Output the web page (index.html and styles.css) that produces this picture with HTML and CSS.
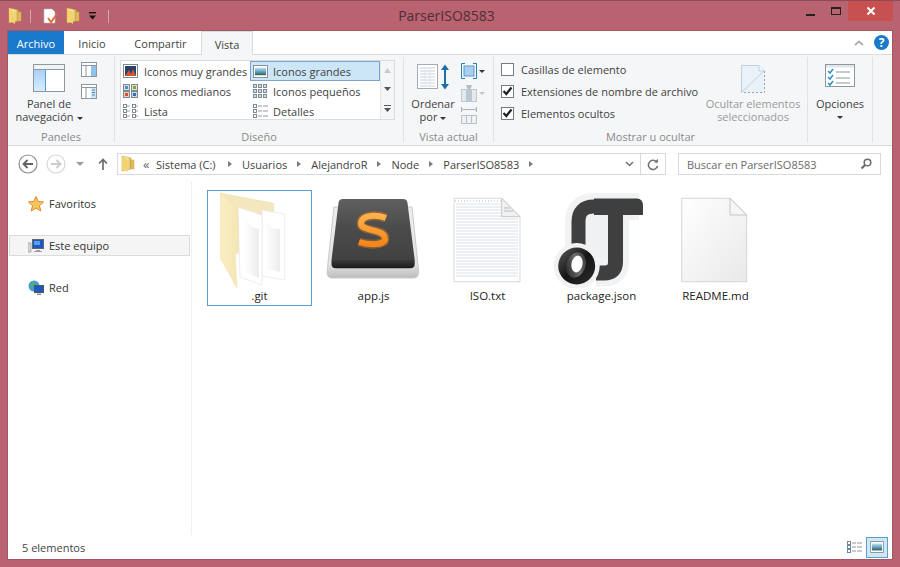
FILE: index.html
```html
<!DOCTYPE html>
<html lang="es">
<head>
<meta charset="utf-8">
<title>ParserISO8583</title>
<link rel="stylesheet" href="styles.css">
</head>
<body>
<svg class="defs" width="0" height="0">
  <defs>
    <linearGradient id="gFolder" x1="0" y1="0" x2="1" y2="0"><stop offset="0" stop-color="#f6dc84"/><stop offset=".55" stop-color="#fbeeb2"/><stop offset="1" stop-color="#d6ac4a"/></linearGradient>
    <linearGradient id="gFlap" x1="0" y1="0" x2="1" y2="0"><stop offset="0" stop-color="#f9eec4"/><stop offset="1" stop-color="#f5e6b4"/></linearGradient>
    <linearGradient id="gPaper" x1="0" y1="0" x2="1" y2="1"><stop offset="0" stop-color="#ffffff"/><stop offset="1" stop-color="#e9e9e9"/></linearGradient>
    <linearGradient id="gInner" x1="0" y1="0" x2="1" y2="0"><stop offset="0" stop-color="#fefefe"/><stop offset="1" stop-color="#ececec"/></linearGradient>
    <linearGradient id="gKey" x1="0" y1="0" x2="0" y2="1"><stop offset="0" stop-color="#606060"/><stop offset=".45" stop-color="#4c4c4c"/><stop offset="1" stop-color="#414141"/></linearGradient>
    <linearGradient id="gLip" x1="0" y1="0" x2="0" y2="1"><stop offset="0" stop-color="#3a3a3a"/><stop offset="1" stop-color="#191919"/></linearGradient>
    <linearGradient id="gBase" x1="0" y1="0" x2="0" y2="1"><stop offset="0" stop-color="#eeeeee"/><stop offset=".8" stop-color="#e2e2e2"/><stop offset="1" stop-color="#bdbdbd"/></linearGradient>
    <linearGradient id="gS" x1="0" y1="0" x2="0" y2="1"><stop offset="0" stop-color="#fdb047"/><stop offset="1" stop-color="#f4861a"/></linearGradient>
    <linearGradient id="gPane" x1="0" y1="0" x2="0" y2="1"><stop offset="0" stop-color="#a9d1f7"/><stop offset="1" stop-color="#d9ecfc"/></linearGradient>
    <linearGradient id="gPic" x1="0" y1="0" x2="0" y2="1"><stop offset="0" stop-color="#bfe0f2"/><stop offset=".55" stop-color="#5da0bf"/><stop offset="1" stop-color="#2f5f4a"/></linearGradient>
    <linearGradient id="gOrb" x1="0" y1="0" x2="1" y2="1"><stop offset="0" stop-color="#5a5a5a"/><stop offset=".5" stop-color="#151515"/><stop offset="1" stop-color="#2c2c2c"/></linearGradient>
    <linearGradient id="gSwirl" x1="0" y1="1" x2="1" y2="0"><stop offset="0" stop-color="#181818"/><stop offset=".55" stop-color="#6e6e6e"/><stop offset="1" stop-color="#262626"/></linearGradient>
    <symbol id="folderSmall" viewBox="0 0 14 18">
      <path d="M1 1 L10 3 V14 L1 16Z" fill="url(#gFolder)" stroke="#c9a445" stroke-width=".6"/>
      <path d="M10 5 H13 V14 H10Z" fill="#e2bd58" stroke="#c9a445" stroke-width=".5"/>
      <path d="M1 1 L7 5 V17 L1 13Z" fill="#f3d36f"/>
    </symbol>
    <symbol id="thumb" viewBox="0 0 16 14">
      <rect x=".5" y=".5" width="15" height="13" fill="#fff" stroke="#7f8a94"/>
      <rect x="2" y="3" width="12" height="8" fill="url(#gPic)"/>
    </symbol>
  </defs>
</svg>

<div class="titlebar">
  <div class="qat">
    <svg class="qat-ic" viewBox="0 0 14 18"><use href="#folderSmall"/></svg>
    <span class="qat-sep"></span>
    <svg class="qat-ic" viewBox="0 0 14 18"><path d="M1 2H9L12 5V16H1Z" fill="#fff" stroke="#bbb" stroke-width=".6"/><path d="M5 11 L8 15 L14 7" fill="none" stroke="#e0703a" stroke-width="2"/></svg>
    <svg class="qat-ic qat-ic2" viewBox="0 0 14 18"><use href="#folderSmall"/></svg>
    <svg class="qat-drop" viewBox="0 0 9 9"><rect x="1" y="0" width="7" height="1.4" fill="#111"/><path d="M1 3.5H8L4.5 7.5Z" fill="#111"/></svg>
    <span class="qat-sep qat-sep2"></span>
  </div>
  <div class="title">ParserISO8583</div>
  <div class="winbtns">
    <span class="wb wb-min"><i></i></span>
    <span class="wb wb-max"><i></i></span>
    <span class="wb wb-close"><svg width="10" height="10" viewBox="0 0 10 10"><path d="M1.500 1.500 L8.500 8.500 M8.500 1.500 L1.500 8.500" stroke="#fff" stroke-width="2"/></svg></span>
  </div>
</div>

<div class="window">
  <div class="tabs">
    <span class="tab tab-file">Archivo</span>
    <span class="tab tab-inicio">Inicio</span>
    <span class="tab tab-share">Compartir</span>
    <span class="tab tab-on">Vista</span>
    <span class="tabs-right">
      <svg class="chev" width="10" height="6" viewBox="0 0 10 6"><path d="M1 5 L5 1.500 L9 5" fill="none" stroke="#a9adb1" stroke-width="1.800"/></svg>
      <span class="help">?</span>
    </span>
  </div>

  <div class="ribbon">
    <section class="group g-panes">
      <div class="gbody panes">
        <div class="bigbtn nav-btn">
          <svg width="32" height="29" viewBox="0 0 32 29"><rect x=".5" y=".5" width="31" height="27" fill="#fff" stroke="#8d979f"/><rect x="1" y="1" width="30" height="4" fill="#f1f3f5"/><path d="M1 5.500H31" stroke="#8d979f"/><rect x="1" y="6" width="11" height="21" fill="url(#gPane)"/><path d="M12.500 6V27" stroke="#4f9bd9"/></svg>
          <span class="biglbl">Panel de<br>navegación<i class="caret caret-in"></i></span>
        </div>
        <div class="pane-small">
          <svg width="16" height="15" viewBox="0 0 16 15"><rect x=".5" y=".5" width="15" height="14" fill="#fff" stroke="#8d979f"/><path d="M1 3.500H15" stroke="#8d979f"/><path d="M5 4V14" stroke="#8d979f"/><rect x="10" y="4" width="5" height="10" fill="#8fc3ee"/></svg>
          <svg width="16" height="15" viewBox="0 0 16 15"><rect x=".5" y=".5" width="15" height="14" fill="#fff" stroke="#8d979f"/><path d="M1 3.500H15" stroke="#8d979f"/><path d="M5 4V14" stroke="#8d979f"/><rect x="10" y="4" width="5" height="10" fill="#cfe4f6"/><path d="M11 6H14M11 8.500H14M11 11H14" stroke="#4f86b8"/></svg>
        </div>
      </div>
      <div class="glabel">Paneles</div>
    </section>

    <section class="group g-layout">
      <div class="gbody">
        <div class="gallery">
          <div class="gal-grid">
            <div class="gal-item"><svg class="gi" width="15" height="14" viewBox="0 0 15 14"><rect x=".5" y=".5" width="14" height="13" fill="#fff" stroke="#7f8a94"/><rect x="2" y="2" width="11" height="10" fill="#27406b"/><path d="M2 12 L6 6 L8 10 L10 5 L13 12Z" fill="#d2562c"/></svg>Iconos muy grandes</div>
            <div class="gal-item gal-on"><svg class="gi" width="15" height="13" viewBox="0 0 16 14"><use href="#thumb"/></svg>Iconos grandes</div>
            <div class="gal-item"><svg class="gi" width="15" height="14" viewBox="0 0 15 14"><rect x=".5" y=".5" width="6" height="6" fill="#cfe0ec" stroke="#7f8a94"/><rect x="2" y="2" width="3" height="3" fill="#5b8fb8"/><rect x="8.500" y=".5" width="6" height="6" fill="#dfe6c4" stroke="#7f8a94"/><rect x="10" y="2" width="3" height="3" fill="#8aa03c"/><rect x=".5" y="7.500" width="6" height="6" fill="#efcdbf" stroke="#7f8a94"/><rect x="2" y="9" width="3" height="3" fill="#c9552c"/><rect x="8.500" y="7.500" width="6" height="6" fill="#cfdcea" stroke="#7f8a94"/><rect x="10" y="9" width="3" height="3" fill="#3a6ea5"/></svg>Iconos medianos</div>
            <div class="gal-item"><svg class="gi" width="15" height="15" viewBox="0 0 15 15"><g fill="#cfe0ec" stroke="#7f8a94"><rect x=".5" y=".5" width="3" height="3"/><rect x="5.500" y=".5" width="3" height="3"/><rect x="10.500" y=".5" width="3" height="3"/><rect x=".5" y="5.500" width="3" height="3"/><rect x="5.500" y="5.500" width="3" height="3"/><rect x="10.500" y="5.500" width="3" height="3"/><rect x=".5" y="10.500" width="3" height="3"/><rect x="5.500" y="10.500" width="3" height="3"/><rect x="10.500" y="10.500" width="3" height="3"/></g></svg>Iconos pequeños</div>
            <div class="gal-item"><svg class="gi" width="15" height="14" viewBox="0 0 15 14"><g fill="#fff" stroke="#7f8a94"><rect x=".5" y=".5" width="3" height="3"/><rect x=".5" y="5.500" width="3" height="3"/><rect x=".5" y="10.500" width="3" height="3"/><rect x="9.500" y=".5" width="3" height="3"/><rect x="9.500" y="5.500" width="3" height="3"/><rect x="9.500" y="10.500" width="3" height="3"/></g><path d="M4 2H7M4 7H7M4 12H7M13 2H15M13 7H15M13 12H15" stroke="#9aa1a8"/></svg>Lista</div>
            <div class="gal-item"><svg class="gi" width="15" height="14" viewBox="0 0 15 14"><g fill="#fff" stroke="#7f8a94"><rect x=".5" y=".5" width="3" height="3"/><rect x=".5" y="5.500" width="3" height="3"/><rect x=".5" y="10.500" width="3" height="3"/></g><path d="M5 2H9M10 2H15M5 7H9M10 7H15M5 12H9M10 12H15" stroke="#8f969d"/></svg>Detalles</div>
          </div>
          <div class="gal-scroll">
            <svg width="7" height="5" viewBox="0 0 7 5"><path d="M0 5L3.500 0L7 5Z" fill="#c9cccf"/></svg>
            <svg width="7" height="4" viewBox="0 0 7 4"><path d="M0 0H7L3.500 4Z" fill="#555"/></svg>
            <svg width="7" height="7" viewBox="0 0 7 7"><path d="M0 0H7V1H0Z M0 3H7L3.500 7Z" fill="#555"/></svg>
          </div>
        </div>
      </div>
      <div class="glabel">Diseño</div>
    </section>

    <section class="group g-current">
      <div class="gbody current">
        <div class="bigbtn sort-btn">
          <svg width="33" height="26" viewBox="0 0 33 26"><rect x=".5" y=".5" width="20" height="24" fill="#fff" stroke="#a4abb1"/><path d="M3 4H18M3 7H18M3 10H18M3 13H18M3 16H18M3 19H18M3 22H18" stroke="#c5d4de"/><path d="M8 4V23M13 4V23" stroke="#dfe6eb"/><path d="M28 2V24" stroke="#1f6da8" stroke-width="2"/><path d="M24 6L28 .5L32 6ZM24 20L28 25.500L32 20Z" fill="#1f6da8"/></svg>
          <span class="biglbl">Ordenar<br>por<i class="caret caret-in"></i></span>
        </div>
        <div class="cur-small">
          <div class="cs-row"><svg width="16" height="16" viewBox="0 0 16 16"><path d="M4 .5H.5V15.500H4M12 .5H15.500V15.500H12" fill="none" stroke="#2b7fb8"/><rect x="3" y="3" width="10" height="10" fill="#a9cfee" stroke="#5b9bd0"/></svg><i class="caret"></i></div>
          <div class="cs-row"><svg width="16" height="17" viewBox="0 0 16 17"><path d="M5 0H11L9.500 4H6.500Z" fill="#b5bdc4"/><rect x=".5" y="4.500" width="15" height="12" fill="#e3eaef" stroke="#c0c8ce"/><rect x="5" y="4" width="6" height="13" fill="#bcc8d1"/></svg><i class="caret caret-dim"></i></div>
          <div class="cs-row"><svg width="16" height="18" viewBox="0 0 16 18"><path d="M.5 1V6M15.500 1V6M2 3.500H14" stroke="#a8b4bc"/><path d="M2 1.500V5.500L0 3.500ZM14 1.500V5.500L16 3.500Z" fill="#a8b4bc" opacity=".5"/><rect x=".5" y="9.500" width="15" height="8" fill="#eef2f5" stroke="#b8c2c9"/><path d="M5.500 10V17M10.500 10V17" stroke="#b8c2c9"/></svg></div>
        </div>
      </div>
      <div class="glabel">Vista actual</div>
    </section>

    <section class="group g-show">
      <div class="gbody show">
        <div class="checks">
          <label class="chk"><span class="box"></span>Casillas de elemento</label>
          <label class="chk"><span class="box on"><svg width="11" height="10" viewBox="0 0 11 10"><path d="M1.500 5 L4.300 8 L9.500 1.500" fill="none" stroke="#222" stroke-width="2.200"/></svg></span>Extensiones de nombre de archivo</label>
          <label class="chk"><span class="box on"><svg width="11" height="10" viewBox="0 0 11 10"><path d="M1.500 5 L4.300 8 L9.500 1.500" fill="none" stroke="#222" stroke-width="2.200"/></svg></span>Elementos ocultos</label>
        </div>
        <div class="bigbtn hide-btn">
          <svg width="24" height="28" viewBox="0 0 24 28"><path d="M.5 .5H18L23.500 6V27.500H.5Z" fill="#e9f1f9"/><path d="M.5 27.500V.5H18L23.500 6" fill="none" stroke="#c3cfd9"/><path d="M18 .5V6H23.500" fill="#f8fbfd" stroke="#c3cfd9"/><path d="M23.500 6V27.500H.5" fill="none" stroke="#9aa4ac" stroke-dasharray="2 2"/><path d="M.5 27.500L23 6" stroke="#c3cfd9"/></svg>
          <span class="biglbl dim">Ocultar elementos<br>seleccionados</span>
        </div>
      </div>
      <div class="glabel">Mostrar u ocultar</div>
    </section>

    <section class="group g-opts">
      <div class="gbody">
        <div class="bigbtn opts-btn">
          <svg width="30" height="24" viewBox="0 0 30 24"><rect x=".5" y=".5" width="29" height="22" fill="#fff" stroke="#8d979f"/><rect x="1" y="1" width="28" height="2.500" fill="#e2e6e9"/><path d="M3 7L5 9L8 5M3 13L5 15L8 11M3 19L5 21L8 17" fill="none" stroke="#2b93c9" stroke-width="1.500"/><path d="M11 8H25M11 14H25M11 19H25" stroke="#8d979f"/></svg>
          <span class="biglbl">Opciones<br><i class="caret"></i></span>
        </div>
      </div>
    </section>
  </div>

  <div class="navbar">
    <span class="navbtn"><svg width="20" height="20" viewBox="0 0 20 20"><circle cx="10" cy="10" r="9" fill="#fff" stroke="#8a8d90" stroke-width="1.200"/><path d="M15 10H6M9.500 6L5.500 10L9.500 14" fill="none" stroke="#5e6266" stroke-width="1.800"/></svg></span>
    <span class="navbtn nb2"><svg width="20" height="20" viewBox="0 0 20 20"><circle cx="10" cy="10" r="9" fill="#fff" stroke="#d4d6d8" stroke-width="1.200"/><path d="M5 10H14M10.500 6L14.500 10L10.500 14" fill="none" stroke="#c9cbce" stroke-width="1.800"/></svg></span>
    <svg class="nb3" width="8" height="4" viewBox="0 0 8 4"><path d="M0 0H8L4 4Z" fill="#9a9da0"/></svg>
    <svg class="nb4" width="10" height="12" viewBox="0 0 10 12"><path d="M5 12V2M1 5.500L5 1.500L9 5.500" fill="none" stroke="#6a6d70" stroke-width="1.700"/></svg>
    <div class="address">
      <svg class="addr-folder" width="14" height="18" viewBox="0 0 14 18"><use href="#folderSmall"/></svg>
      <span class="laquo">«</span>
      <span class="crumb crumb-first">Sistema (C:)</span><i class="arrow"></i>
      <span class="crumb">Usuarios</span><i class="arrow"></i>
      <span class="crumb">AlejandroR</span><i class="arrow"></i>
      <span class="crumb">Node</span><i class="arrow"></i>
      <span class="crumb">ParserISO8583</span><i class="arrow"></i>
      <span class="addr-end">
        <svg width="9" height="6" viewBox="0 0 9 6"><path d="M1 1L4.500 4.500L8 1" fill="none" stroke="#6e7276" stroke-width="1.500"/></svg>
        <span class="refresh"><svg width="12" height="13" viewBox="0 0 12 13"><path d="M9.800 4.300A4.600 4.600 0 1 0 10.500 8" fill="none" stroke="#6e7276" stroke-width="1.500"/><path d="M7 4.500H11V.8Z" fill="#6e7276"/></svg></span>
      </span>
    </div>
    <div class="search">
      <span>Buscar en ParserISO8583</span>
      <svg width="12" height="12" viewBox="0 0 12 12"><circle cx="7.500" cy="4.500" r="3.300" fill="none" stroke="#6a6d70" stroke-width="1.500"/><path d="M5 7L1.500 10.500" stroke="#6a6d70" stroke-width="2.200"/></svg>
    </div>
  </div>

  <div class="main">
    <aside class="sidebar">
      <div class="side-row"><svg class="side-ic" width="16" height="16" viewBox="0 0 16 16"><path d="M8 .5L10.200 5.500L15.600 6L11.500 9.600L12.800 15L8 12.100L3.200 15L4.500 9.600L.4 6L5.800 5.500Z" fill="#f7c65a" stroke="#e08a2c"/></svg>Favoritos</div>
      <div class="side-row on"><svg class="side-ic" width="16" height="14" viewBox="0 0 16 14"><rect x="0" y="4" width="3" height="9" fill="#d7dadd" stroke="#888" stroke-width=".6"/><rect x="4.500" y=".5" width="11" height="9" fill="#1d57c4" stroke="#666"/><rect x="6" y="2" width="6" height="4" fill="#5d9df0"/><path d="M8 11H12V12H14V13H6V12H8Z" fill="#9aa0a6"/></svg>Este equipo</div>
      <div class="side-row"><svg class="side-ic" width="16" height="16" viewBox="0 0 16 16"><circle cx="6" cy="6" r="5.500" fill="#3f9fd0"/><path d="M2 4Q5 1 7 3Q6 6 3 7Z" fill="#58b25a"/><rect x="6.500" y="5.500" width="9" height="7" fill="#1d57c4" stroke="#555"/><path d="M9 13.500H13V15H9Z" fill="#8a9097"/></svg>Red</div>
    </aside>
    <section class="files">
      <div class="file selected">
        <svg class="file-ic" width="96" height="96" viewBox="0 0 96 96">
          <path d="M8 1L61.700 11.300L62 21L30 40L26 62Z" fill="#f4e7bd" stroke="#ecdca8" stroke-width=".5"/>
          <path d="M50 18L72.700 22V88L50 84Z" fill="#fff" stroke="#e6e6e6" stroke-width=".7"/>
          <path d="M54 27L60 36L68 37V80L54 77Z" fill="url(#gInner)"/>
          <path d="M26 15.300L50 23V93L28 85Z" fill="#fff" stroke="#e6e6e6" stroke-width=".7"/>
          <path d="M33 25L39 35L47 37V86L33 80Z" fill="url(#gInner)"/>
          <path d="M8.300 1.300L26 16V59.700L23.300 63L25 96L8.300 66.300Z" fill="url(#gFlap)" stroke="#efe0aa" stroke-width=".5"/>
        </svg>
        <span class="fname">.git</span>
      </div>
      <div class="file">
        <svg class="file-ic" width="96" height="96" viewBox="0 0 96 96">
          <path d="M8 15H86L92.700 80Q92.700 86 87 86H6Q1 86 1 80Z" fill="url(#gBase)" stroke="#c9c9c9"/>
          <path d="M17 7H77Q81 7 81.500 11L88.700 68H5.500L12.500 11Q13 7 17 7Z" fill="url(#gKey)"/>
          <path d="M5.500 68H88.700V72Q88.700 76.300 84 76.300H10Q5.500 76.300 5.500 72Z" fill="url(#gLip)"/>
          <path d="M60 26C52 23 36 22 35 31C34 40 58 36 59 46C60 54 42 53 33 50" fill="none" stroke="#f58a16" stroke-opacity=".35" stroke-width="9"/>
          <path d="M60 26C52 23 36 22 35 31C34 40 58 36 59 46C60 54 42 53 33 50" fill="none" stroke="url(#gS)" stroke-width="6"/>
        </svg>
        <span class="fname">app.js</span>
      </div>
      <div class="file">
        <svg class="file-ic" width="96" height="96" viewBox="0 0 96 96">
          <path d="M14 6.300H61.700L80 24.700V89.700H14Z" fill="#fff" stroke="#d9d9d9"/>
          <path d="M16 12H61M16 15H62M16 18H62M16 21H63M16 24H78M16 27H78M16 30H78M16 33H78M16 36H78M16 39H78M16 42H78M16 45H78M16 48H78M16 51H78M16 54H78M16 57H78M16 60H78M16 63H78M16 66H78M16 69H78M16 72H78M16 75H78M16 78H78M16 81H78M16 84H78" stroke="#d8dee6"/>
          <path d="M15 9H61" stroke="#b9b9b9" stroke-dasharray="1 2"/>
          <path d="M61.700 6.300V24.700H80Z" fill="#f1f1f1" stroke="#c8c8c8"/>
          <path d="M64 16H70M64 19H73" stroke="#bbb"/>
        </svg>
        <span class="fname">ISO.txt</span>
      </div>
      <div class="file">
        <svg class="file-ic" width="96" height="96" viewBox="0 0 96 96">
          <path d="M24.500 60V30Q24.500 14.500 40 14.500H85M61.500 20V70Q61.500 81 50 81H42" fill="none" stroke="#f1f2f3" stroke-width="27" stroke-linejoin="round"/>
          <rect x="30" y="22" width="26" height="45" fill="#f0f1f2"/>
          <path d="M24.500 60V30Q24.500 14.500 40 14.500H83" fill="none" stroke="#3f3f3f" stroke-width="14"/>
          <path d="M40 6.500H83Q89 6.500 89 14V23H40Z" fill="#3f3f3f"/>
          <path d="M61.500 20V70Q61.500 81 50 81H42" fill="none" stroke="#3f3f3f" stroke-width="15"/>
          <circle cx="22.700" cy="74" r="23" fill="#f1f2f3"/>
          <circle cx="22.700" cy="74" r="18.500" fill="url(#gOrb)"/>
          <ellipse cx="22" cy="73" rx="9.500" ry="13" fill="url(#gSwirl)" transform="rotate(20 22 73)"/>
          <ellipse cx="23" cy="72" rx="5.500" ry="8.500" fill="#fff" transform="rotate(12 23 72)"/>
        </svg>
        <span class="fname">package.json</span>
      </div>
      <div class="file">
        <svg class="file-ic" width="96" height="96" viewBox="0 0 96 96">
          <path d="M13.700 6.300H62L78.700 23V89.700H13.700Z" fill="url(#gPaper)" stroke="#d6d6d6"/>
          <path d="M62 6.300V23H78.700Z" fill="#f6f6f6" stroke="#c4c4c4"/>
        </svg>
        <span class="fname">README.md</span>
      </div>
    </section>
  </div>

  <div class="status">
    <span>5 elementos</span>
    <span class="views">
      <svg width="15" height="13" viewBox="0 0 15 13"><g fill="#fff" stroke="#6e8a99"><rect x=".5" y=".5" width="3" height="3"/><rect x=".5" y="4.500" width="3" height="3"/><rect x=".5" y="8.500" width="3" height="3"/></g><path d="M5 2H9M10 2H15M5 6H9M10 6H15M5 10H9M10 10H15" stroke="#8f969d"/></svg>
      <span class="view-on"><svg width="14" height="12" viewBox="0 0 16 14"><use href="#thumb"/></svg></span>
    </span>
  </div>
</div>
</body>
</html>
```

FILE: styles.css
```css
* { box-sizing: border-box; }
html, body { margin: 0; padding: 0; }
body {
  width: 900px;
  height: 567px;
  overflow: hidden;
  background: #b96270;
  font-family: "Open Sans", "Noto Sans", sans-serif;
  font-size: 11px;
  color: #3f3f3f;
  display: flex;
  flex-direction: column;
  padding: 0 8px 8px;
}
.defs { position: absolute; }
svg { display: block; flex: none; }

/* title bar */
.titlebar {
  height: 31px;
  flex: none;
  display: grid;
  grid-template-columns: 1fr auto 1fr;
  align-items: start;
  border-top: 1px solid #8e4a56;
  margin: 0 -8px;
  padding: 0 15px 0 8px;
}
.qat { display: flex; align-items: center; height: 30px; }
.qat-ic { width: 14px; height: 18px; }
.qat-sep { width: 1px; height: 13px; background: #d9a3ac; margin: 0 12px 0 8px; }
.qat-sep2 { margin: 0 0 0 11px; }
.qat-ic2 { margin-left: 9px; }
.qat-drop { width: 9px; height: 9px; margin-left: 8px; }
.title { font-size: 14px; line-height: 30px; color: #4c3038; }
.winbtns { display: flex; justify-self: end; align-items: flex-start; margin-right: -8px; }
.wb { display: flex; align-items: center; justify-content: center; height: 20px; }
.wb-min { width: 26px; }
.wb-min i { width: 9px; height: 2px; background: #222; margin-top: 7px; }
.wb-max { width: 26px; }
.wb-max i { width: 10px; height: 8px; border: 1px solid #222; border-top-width: 2px; margin-top: -1px; }
.wb-close { width: 45px; background: #c75050; margin-left: -1px; }

/* window */
.window {
  flex: 1;
  min-height: 0;
  background: #fff;
  display: flex;
  flex-direction: column;
  box-shadow: 0 0 0 1px #a35763;
}

/* tabs */
.tabs { height: 24px; flex: none; display: flex; align-items: stretch; border-bottom: 1px solid #dadbdc; }
.tab { display: flex; align-items: center; justify-content: center; height: 23px; padding-top: 2px; }
.tab-file { width: 56px; background: #1979ca; color: #fff; }
.tab-inicio { width: 56px; }
.tab-share { width: 81px; }
.tab-on { width: 52px; height: 24px; background: #f5f6f7; border: 1px solid #dadbdc; border-bottom: 0; }
.tabs-right { margin-left: auto; display: flex; align-items: center; gap: 10px; padding-right: 3px; }
.help { width: 15px; height: 15px; border-radius: 50%; background: #1979ca; color: #fff; font-weight: 700; font-size: 12px; line-height: 15px; text-align: center; }

/* ribbon */
.ribbon { height: 91px; flex: none; display: flex; background: #f5f6f7; border-bottom: 1px solid #dadbdc; padding-top: 2px; }
.group { display: flex; flex-direction: column; border-right: 1px solid #e2e3e4; flex: none; margin-bottom: 3px; }
.gbody { flex: 1; min-height: 0; display: flex; }
.glabel { height: 17px; text-align: center; color: #8a8a8a; line-height: 23px; white-space: nowrap; }
.g-panes { width: 107px; }
.g-layout { width: 289px; }
.g-current { width: 90px; }
.g-show { width: 314px; }
.g-opts { width: 65px; }

.bigbtn { display: flex; flex-direction: column; align-items: center; }
.biglbl { text-align: center; line-height: 13px; display: block; margin-top: 7px; white-space: nowrap; }
.dim { color: #9a9a9a; }
.caret { display: inline-block; width: 0; height: 0; border: 3px solid transparent; border-top: 3.500px solid #333; border-bottom: 0; vertical-align: middle; }
.caret-in { margin-left: 3px; }
.caret-dim { border-top-color: #c3c5c7; }

.panes { padding: 5px 0 0 8px; }
.nav-btn { width: 66px; padding-top: 2px; }
.nav-btn .biglbl { margin-top: 4px; }
.pane-small { display: flex; flex-direction: column; gap: 7px; margin-left: -1px; }
.pane-small svg { margin-left: 0; }

.gallery { display: flex; height: 60px; margin: 3px 0 0 5px; background: #fff; border: 1px solid #dadbdc; width: 275px; }
.gal-grid { display: grid; grid-template-columns: 129px 130px; grid-auto-rows: 20px; }
.gal-item { display: flex; align-items: center; gap: 6px; padding-left: 2px; white-space: nowrap; }
.gal-item:nth-child(even) { padding-left: 3px; gap: 5px; }
.gi { width: 15px; }
.gal-on { background: #cde6f7; box-shadow: inset 0 0 0 1px #7da2ce; }
.gal-scroll { flex: 1; display: flex; flex-direction: column; align-items: center; justify-content: space-around; border-left: 1px solid #e4e5e6; background: #f5f6f7; }

.current { padding: 7px 0 0 12px; }
.sort-btn { width: 34px; }
.cur-small { display: flex; flex-direction: column; margin-left: 11px; gap: 4px; margin-top: -2px; }
.cs-row { display: flex; align-items: center; gap: 2px; height: 18px; }

.show { padding: 4px 0 0 7px; }
.checks { display: flex; flex-direction: column; gap: 8px; width: 204px; padding-top: 1px; }
.chk { display: flex; align-items: center; gap: 7px; height: 14px; white-space: nowrap; }
.box { width: 13px; height: 13px; border: 1px solid #7b7b7b; background: #fff; display: flex; align-items: center; justify-content: center; flex: none; }
.hide-btn { margin-left: 1px; padding-top: 4px; width: 94px; }
.hide-btn .biglbl { margin-top: 4px; }
.opts-btn { width: 64px; padding-top: 7px; }
.opts-btn .biglbl { margin-top: 9px; }
.opts-btn .caret { vertical-align: 2px; }

/* nav */
.navbar { height: 36px; flex: none; display: flex; align-items: center; padding: 0 11px 0 10px; }
.navbtn { width: 20px; }
.nb2 { margin-left: 8px; }
.nb3 { margin-left: 10px; }
.nb4 { margin-left: 14px; }
.address { margin-left: 9px; width: 549px; height: 22px; border: 1px solid #d9d9d9; display: flex; align-items: center; padding-left: 3px; }
.addr-folder { margin-right: 8px; }
.laquo { width: 13px; font-size: 13px; line-height: 14px; color: #666; }
.crumb { white-space: nowrap; }
.crumb-first { min-width: 62px; }
.arrow { width: 0; height: 0; border: 3.500px solid transparent; border-left: 4px solid #7b7b7b; border-right: 0; margin: 0 10px; }
.addr-end { margin-left: auto; display: flex; align-items: center; height: 100%; }
.addr-end > svg { margin-right: 6px; }
.refresh { width: 25px; height: 100%; border-left: 1px solid #d9d9d9; display: flex; align-items: center; justify-content: center; }
.search { margin-left: 12px; flex: 1; height: 22px; border: 1px solid #d9d9d9; display: flex; align-items: center; justify-content: space-between; padding: 0 8px; color: #6b6b6b; }

/* main */
.main { flex: 1; min-height: 0; display: flex; }
.sidebar { width: 184px; flex: none; border-right: 1px solid #f0f0f0; padding-top: 11px; display: flex; flex-direction: column; gap: 21px; padding-left: 1px; }
.side-row { height: 21px; display: flex; align-items: center; gap: 5px; padding-left: 18px; color: #333; border: 1px solid transparent; margin-right: 1px; }
.side-ic { width: 16px; }
.side-row.on { background: #f5f5f5; border-color: #dcdcdc; }
.files { flex: 1; display: grid; grid-template-columns: repeat(auto-fill, 105px); grid-auto-rows: 116px; column-gap: 9px; padding: 8px 0 0 15px; align-content: start; }
.file { display: flex; flex-direction: column; align-items: center; border: 1px solid transparent; padding-top: 1px; }
.file-ic { width: 96px; height: 96px; }
.fname { line-height: 14px; margin-top: 1px; color: #222; white-space: nowrap; font-size: 11.5px; }
.selected { border-color: #5a9fd0; }

/* status */
.status { height: 24px; flex: none; display: flex; align-items: center; justify-content: space-between; padding: 0 4px 0 14px; color: #444; }
.views { display: flex; align-items: center; gap: 4px; }
.view-on { width: 22px; height: 21px; background: #cde8f9; border: 1px solid #5b9fc9; display: flex; align-items: center; justify-content: center; }
```
